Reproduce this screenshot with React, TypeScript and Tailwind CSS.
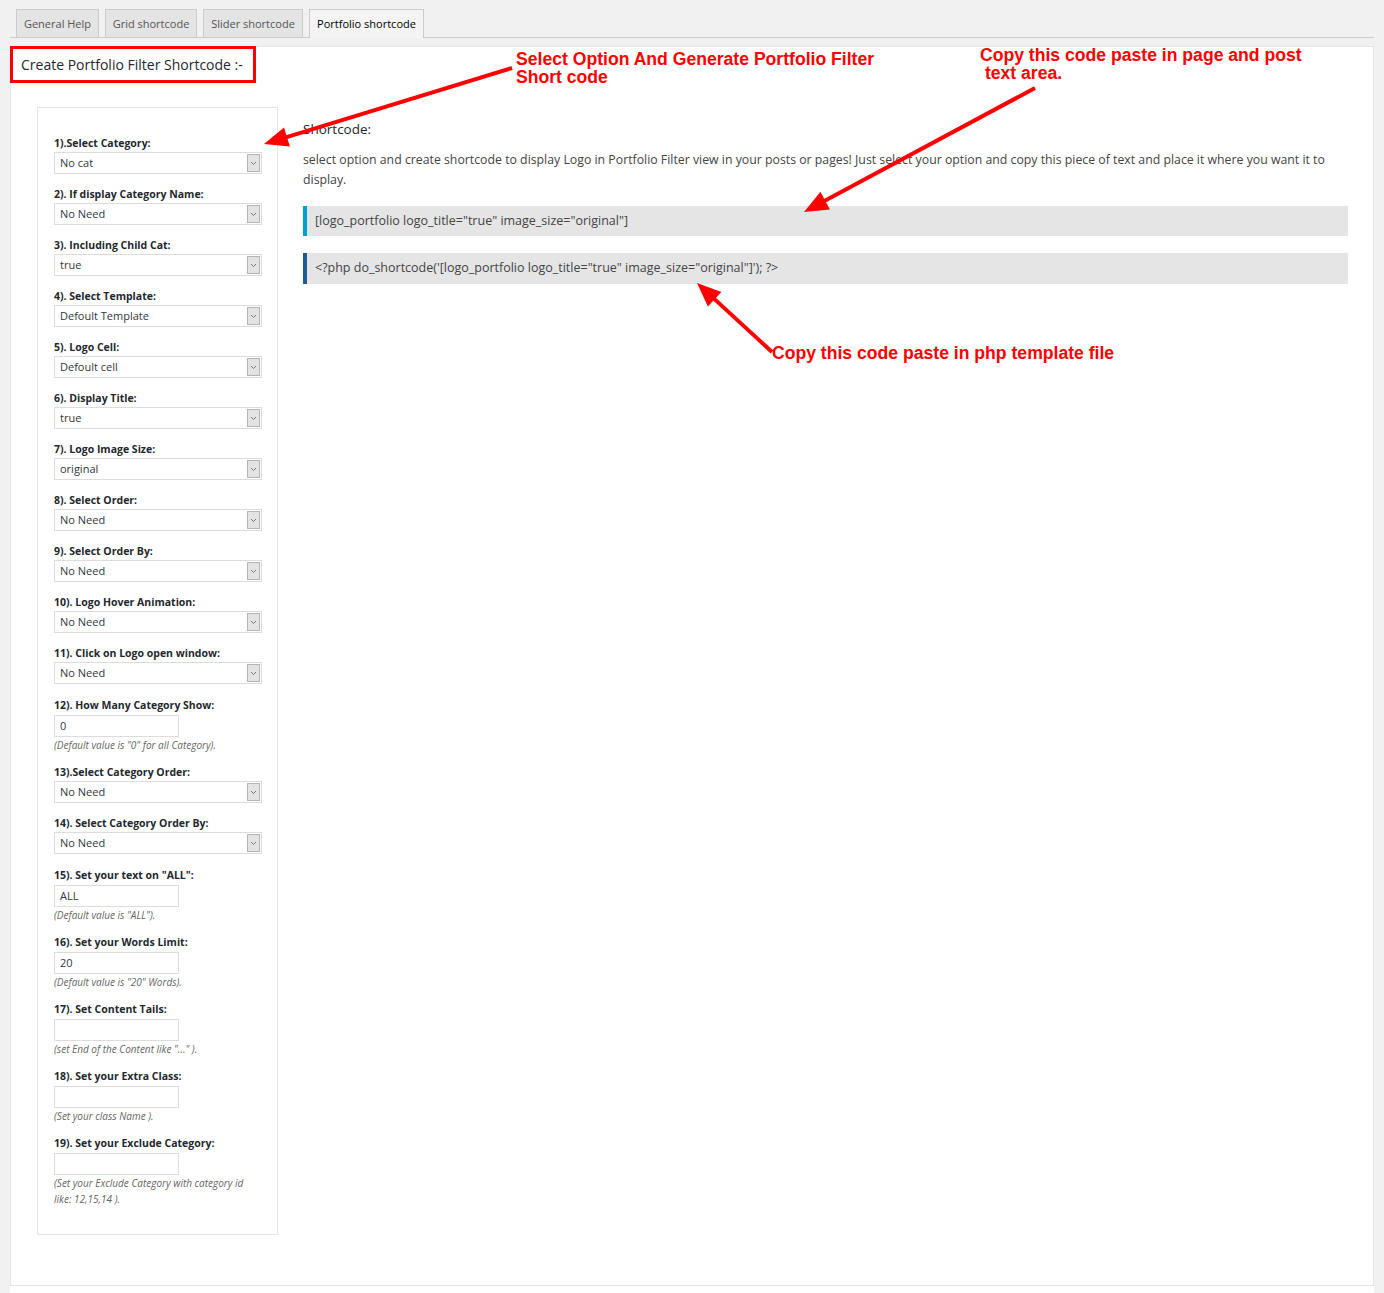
import React from "react";

type Field =
  | { kind: "select"; label: string; value: string }
  | { kind: "text"; label: string; value: string; help: React.ReactNode };

const fields: Field[] = [
  { kind: "select", label: "1).Select Category:", value: "No cat" },
  { kind: "select", label: "2). If display Category Name:", value: "No Need" },
  { kind: "select", label: "3). Including Child Cat:", value: "true" },
  { kind: "select", label: "4). Select Template:", value: "Defoult Template" },
  { kind: "select", label: "5). Logo Cell:", value: "Defoult cell" },
  { kind: "select", label: "6). Display Title:", value: "true" },
  { kind: "select", label: "7). Logo Image Size:", value: "original" },
  { kind: "select", label: "8). Select Order:", value: "No Need" },
  { kind: "select", label: "9). Select Order By:", value: "No Need" },
  { kind: "select", label: "10). Logo Hover Animation:", value: "No Need" },
  { kind: "select", label: "11). Click on Logo open window:", value: "No Need" },
  {
    kind: "text",
    label: "12). How Many Category Show:",
    value: "0",
    help: '(Default value is "0" for all Category).',
  },
  { kind: "select", label: "13).Select Category Order:", value: "No Need" },
  { kind: "select", label: "14). Select Category Order By:", value: "No Need" },
  {
    kind: "text",
    label: '15). Set your text on "ALL":',
    value: "ALL",
    help: '(Default value is "ALL").',
  },
  {
    kind: "text",
    label: "16). Set your Words Limit:",
    value: "20",
    help: '(Default value is "20" Words).',
  },
  {
    kind: "text",
    label: "17). Set Content Tails:",
    value: "",
    help: '(set End of the Content like "..." ).',
  },
  {
    kind: "text",
    label: "18). Set your Extra Class:",
    value: "",
    help: "(Set your class Name ).",
  },
  {
    kind: "text",
    label: "19). Set your Exclude Category:",
    value: "",
    help: (
      <>
        (Set your Exclude Category with category id
        <br />
        like: 12,15,14 ).
      </>
    ),
  },
];

const tabs = [
  { name: "General Help", w: "w-[83px]" },
  { name: "Grid shortcode", w: "w-[92px]" },
  { name: "Slider shortcode", w: "w-[100px]" },
  { name: "Portfolio shortcode", w: "w-[115px]" },
];

function Arrow({ x1, y1, x2, y2 }: { x1: number; y1: number; x2: number; y2: number }) {
  const dx = x2 - x1;
  const dy = y2 - y1;
  const len = Math.hypot(dx, dy);
  const ux = dx / len;
  const uy = dy / len;
  const headLen = 24;
  const headW = 10;
  const bx = x2 - ux * headLen;
  const by = y2 - uy * headLen;
  const pts = `${x2},${y2} ${bx - uy * headW},${by + ux * headW} ${bx + uy * headW},${by - ux * headW}`;
  return (
    <g>
      <line x1={x1} y1={y1} x2={bx + ux * 2} y2={by + uy * 2} stroke="#ff0000" strokeWidth={4} />
      <polygon points={pts} fill="#ff0000" />
    </g>
  );
}

function SelectBox({ value }: { value: string }) {
  return (
    <div className="mt-px flex h-[22px] w-[208px] items-center justify-between border border-[#dcdcdc] bg-white">
      <span className="pl-[5px] text-[11px] text-[#32373c]">{value}</span>
      <span className="mr-px flex h-[18px] w-[13px] items-center justify-center border border-[#b4b4b4] bg-[#e3e3e3]">
        <svg width="7" height="5" viewBox="0 0 7 5">
          <path d="M1 1 L3.5 3.5 L6 1" fill="none" stroke="#777" strokeWidth="1" />
        </svg>
      </span>
    </div>
  );
}

export default function App() {
  return (
    <div
      className="relative min-h-[1293px] w-[1384px] bg-[#f1f1f1] text-[#444]"
      style={{ fontFamily: '"Open Sans", "Noto Sans", sans-serif' }}
    >
      {/* tabs */}
      <div className="mx-[10px] flex h-[38px] items-end gap-[6px] border-b border-[#ccc] pl-[6px]">
        {tabs.map((t, i) => (
          <div
            key={t.name}
            className={
              i === 3
                ? `-mb-px flex h-[29px] ${t.w} items-center justify-center border border-b-0 border-[#ccc] bg-[#f4f4f4] pt-[1px] text-[11px] text-black`
                : `flex h-[28px] ${t.w} items-center justify-center border border-b-0 border-[#ccc] bg-[#e4e4e4] pt-[2px] text-[11px] text-[#555]`
            }
          >
            {t.name}
          </div>
        ))}
      </div>

      {/* main panel */}
      <div className="mx-[10px] mt-[8px] w-[1364px] border border-[#e5e5e5] bg-white pb-[50px]">
        <div className="-ml-px -mt-px flex h-[37px] w-[246px] items-center border-[3px] border-[#f00] pl-[8px] text-[14px] text-[#23282d]">
          Create Portfolio Filter Shortcode :-
        </div>

        <div className="mt-[24px] flex gap-[25px] pl-[26px] pr-[25px]">
          {/* left form panel */}
          <div className="w-[241px] shrink-0 border border-[#e5e5e5] px-[16px] py-[27px]">
            {fields.map((f, i) => {
              const prev = i > 0 ? fields[i - 1] : null;
              const gap = !prev
                ? ""
                : prev.kind === "text"
                  ? "mt-[11px]"
                  : f.kind === "text"
                    ? "mt-[13px]"
                    : "mt-[12px]";
              return (
                <div key={i} className={gap}>
                  <div className="h-[16px] text-[10.5px] leading-[16px] font-bold text-[#23282d]">{f.label}</div>
                  {f.kind === "select" ? (
                    <SelectBox value={f.value} />
                  ) : (
                    <>
                      <div className="mt-[2px] flex h-[22px] w-[125px] items-center border border-[#dcdcdc] bg-white pl-[5px] text-[11px] text-[#32373c]">
                        {f.value}
                      </div>
                      <div className="text-[10px] leading-[16px] italic text-[#666]">{f.help}</div>
                    </>
                  )}
                </div>
              );
            })}
          </div>

          {/* right shortcode column */}
          <div className="flex-1">
            <div className="mt-[12px] text-[13.5px] leading-[20px] text-[#23282d]">Shortcode:</div>
            <p className="mt-[11px] text-[12.3px] leading-[20px] text-[#444]">
              select option and create shortcode to display Logo in Portfolio Filter view in your posts or pages! Just select your option and copy this piece of text and place it where you want it to display.
            </p>
            <div className="mt-[16px] flex h-[30px] items-center border-l-4 border-[#00a0d2] bg-[#e5e5e5] pl-[8px] text-[12.5px] text-[#444]">
              [logo_portfolio logo_title="true" image_size="original"]
            </div>
            <div className="mt-[17px] flex h-[31px] items-center border-l-4 border-[#1f5c8f] bg-[#e5e5e5] pl-[8px] text-[12.5px] text-[#444]">
              {'<?php do_shortcode(\'[logo_portfolio logo_title="true" image_size="original"]\'); ?>'}
            </div>
          </div>
        </div>
      </div>

      <div className="mx-[10px] h-[7px] bg-white" />
      <div className="mx-[10px] h-[10px] border-t border-[#e1e1e1] bg-white" />

      {/* annotations */}
      <div
        className="pointer-events-none absolute left-[516px] top-[50px] text-[17.6px] leading-[18px] font-bold text-[#f00]"
        style={{ fontFamily: '"Liberation Sans", Arial, sans-serif' }}
      >
        Select Option And Generate Portfolio Filter
        <br />
        Short code
      </div>
      <div
        className="pointer-events-none absolute left-[980px] top-[46px] text-[17.6px] leading-[18px] font-bold text-[#f00]"
        style={{ fontFamily: '"Liberation Sans", Arial, sans-serif' }}
      >
        Copy this code paste in page and post
        <br />
        &nbsp;text area.
      </div>
      <div
        className="pointer-events-none absolute left-[772px] top-[343px] text-[17.6px] leading-[20px] font-bold text-[#f00]"
        style={{ fontFamily: '"Liberation Sans", Arial, sans-serif' }}
      >
        Copy this code paste in php template file
      </div>
      <svg className="pointer-events-none absolute left-0 top-0" width="1384" height="1293">
        <Arrow x1={512} y1={68} x2={264} y2={144} />
        <Arrow x1={1035} y1={88} x2={804} y2={212} />
        <Arrow x1={772} y1={352} x2={697} y2={283} />
      </svg>
    </div>
  );
}
